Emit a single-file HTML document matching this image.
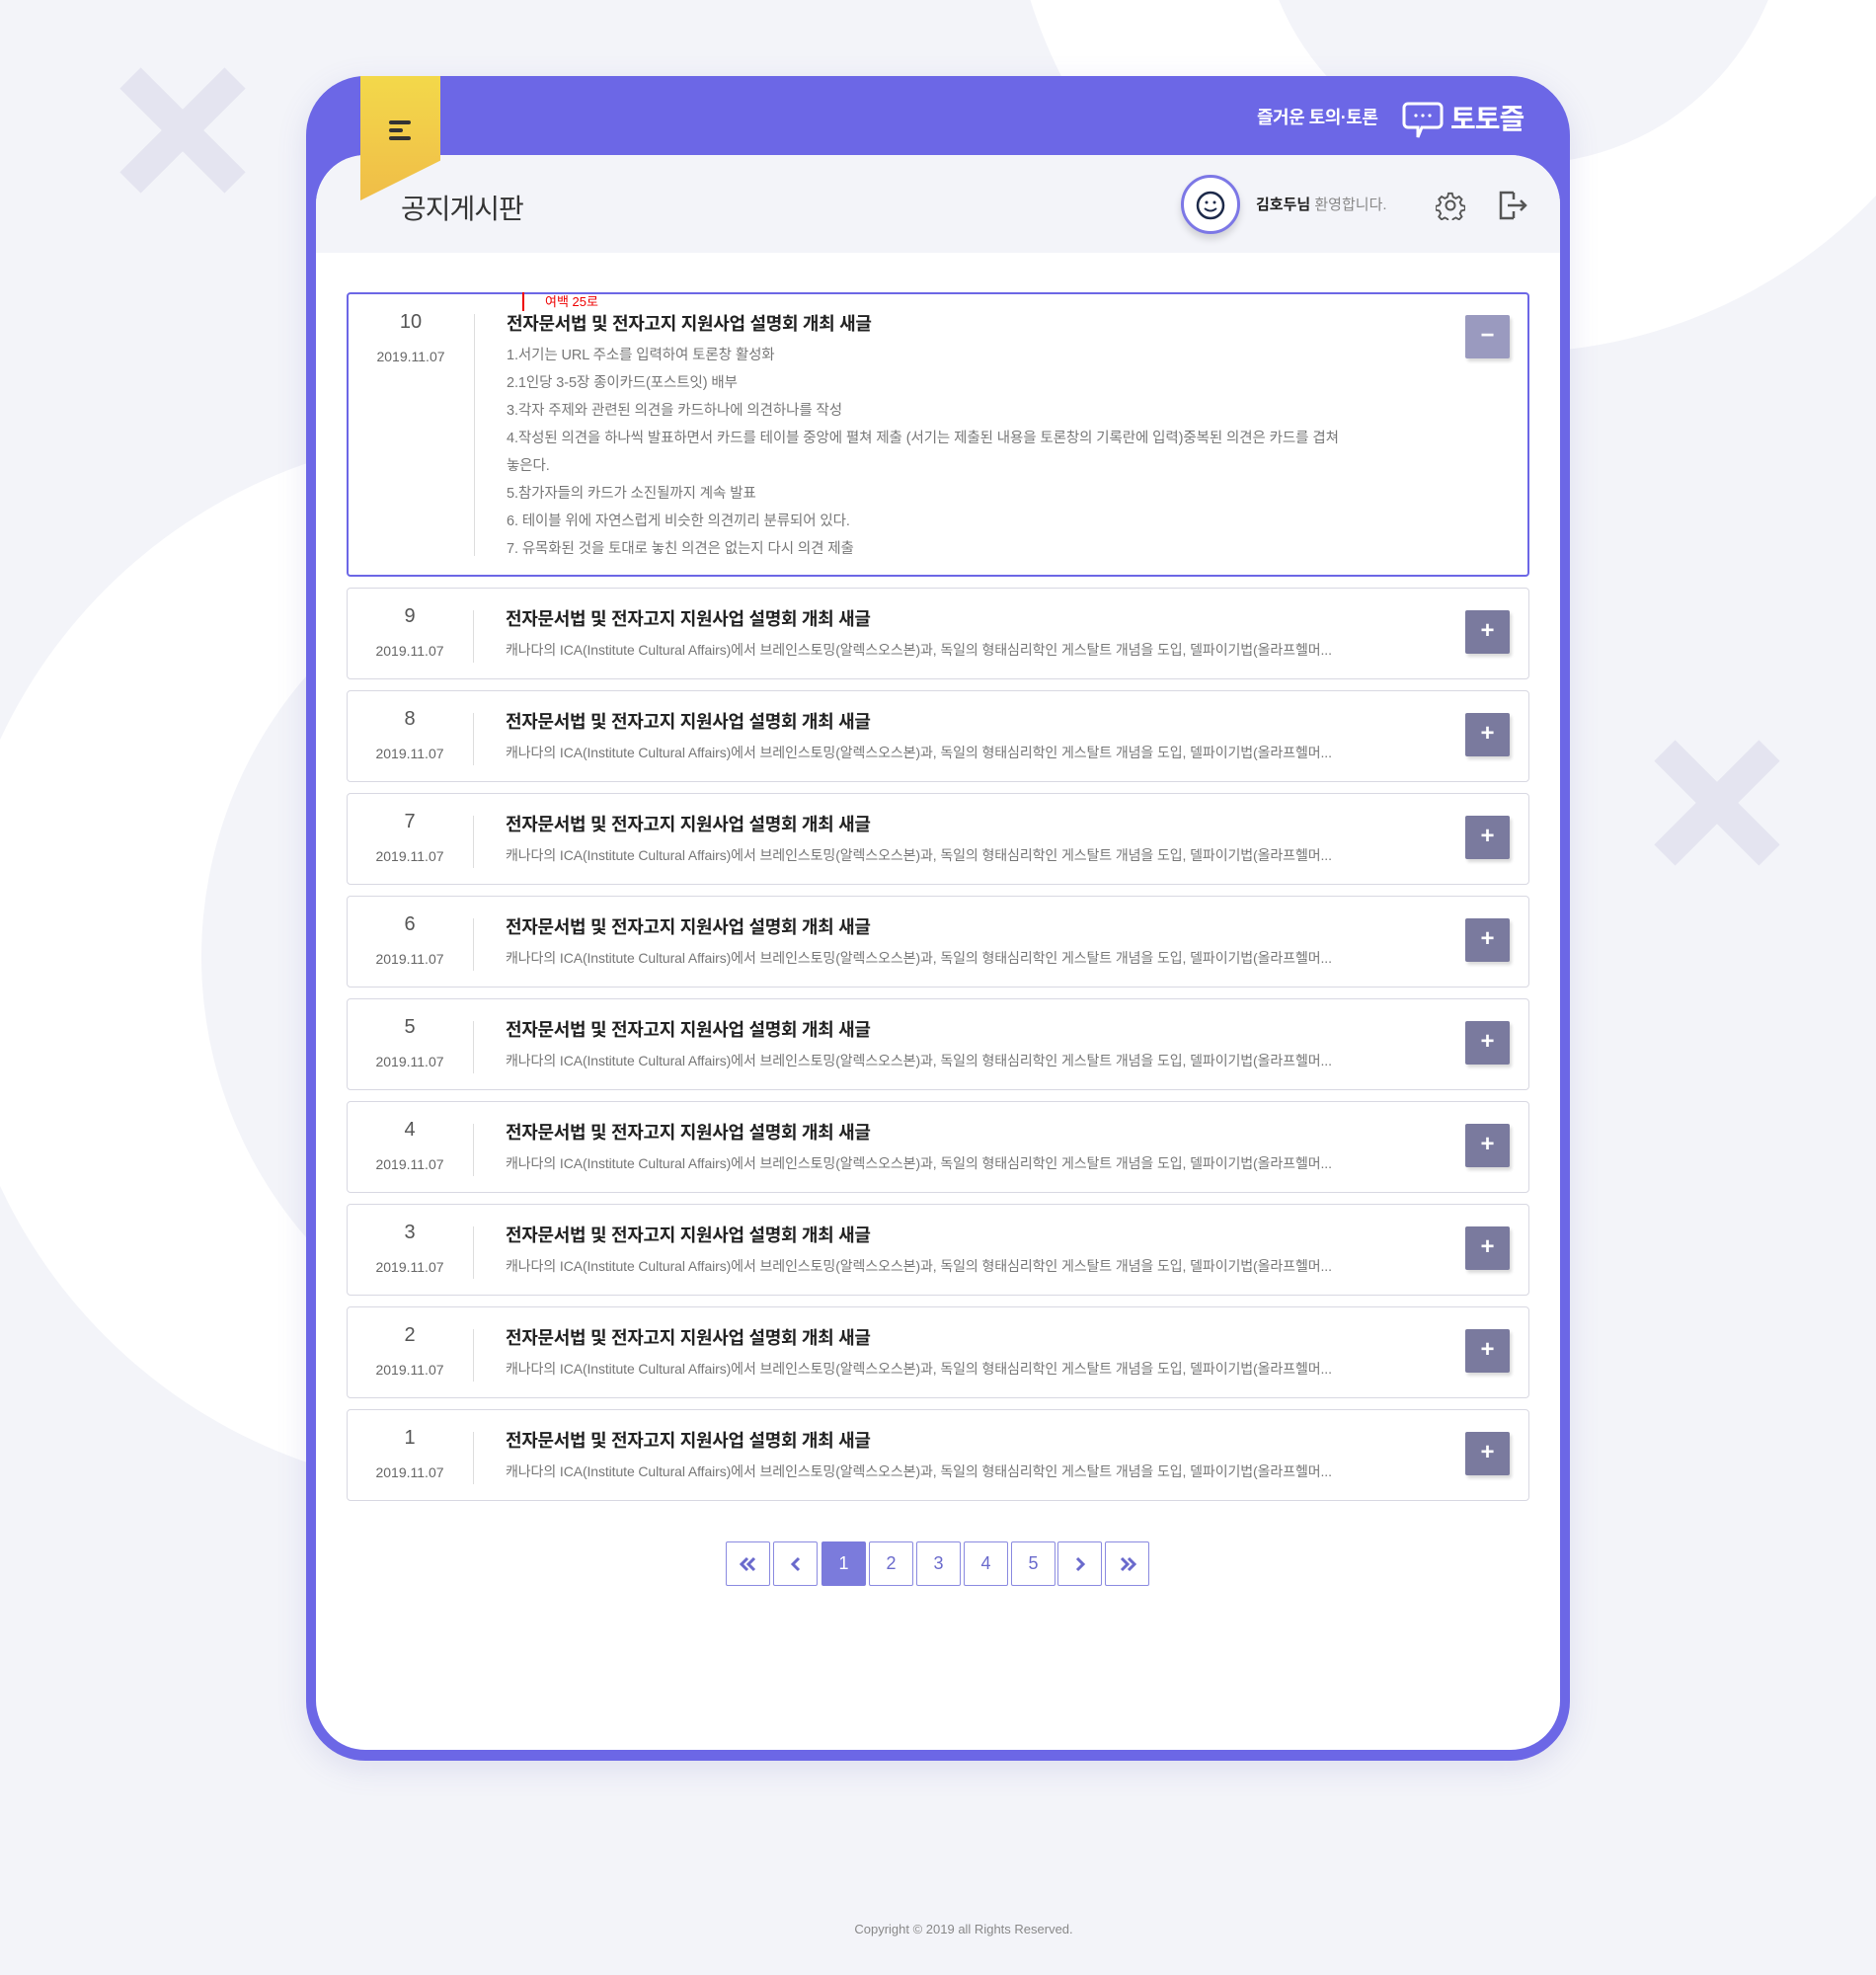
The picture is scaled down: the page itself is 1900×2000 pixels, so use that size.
<!DOCTYPE html>
<html><head><meta charset="utf-8"><style>
*{margin:0;padding:0;box-sizing:border-box}
body{width:1900px;height:2000px;background:#f3f4f9;position:relative;overflow:hidden;font-family:"Liberation Sans","Noto Sans CJK KR",sans-serif}
.c{position:absolute;border-radius:50%}
.x{position:absolute;width:122px;height:122px}
.x:before,.x:after{content:"";position:absolute;left:-14px;top:46px;width:150px;height:30px;background:#e4e4f0;transform:rotate(45deg)}
.x:after{transform:rotate(-45deg)}
.card{position:absolute;left:310px;top:77px;width:1280px;height:1706px;background:#6c67e6;border-radius:60px;box-shadow:0 8px 30px rgba(100,100,180,.15)}
.inner{position:absolute;left:10px;top:80px;width:1260px;height:1615px;background:#fff;border-radius:50px;overflow:hidden}
.ghead{position:absolute;left:0;top:0;width:100%;height:99px;background:#f3f4f9}
.rib{position:absolute;left:365px;top:77px;width:81px;height:126px;background:linear-gradient(#f3d84a,#f0bd48);clip-path:polygon(0 0,100% 0,100% 68%,0 100%);filter:drop-shadow(6px 6px 8px rgba(0,0,0,.2))}
.item{position:absolute;left:351px;width:1198px;height:93px;background:#fff;border:1px solid #d8d8e2;border-radius:4px}
.num{position:absolute;left:0;width:126px;text-align:center;top:17px;font-size:20px;color:#555}
.date{position:absolute;left:0;width:126px;text-align:center;top:55px;font-size:14px;color:#666}
.div{position:absolute;left:127px;top:22px;height:53px;border-left:1px solid #ddd}
.tit{position:absolute;left:160px;top:17px;font-size:18px;color:#222;font-weight:bold;letter-spacing:-.3px}
.desc{position:absolute;left:160px;top:52px;font-size:14px;color:#777;letter-spacing:-.1px}
.btn{position:absolute;left:1132px;top:22px;width:45px;height:44px;background:#7a7a9e;color:#fff;font-size:24px;font-weight:bold;text-align:center;line-height:42px;border-radius:2px;box-shadow:2px 3px 3px rgba(0,0,0,.15)}
.pg{position:absolute;top:1561px;width:45px;height:45px;border:1px solid #8a8ae0;border-radius:2px;color:#6a6acc;font-size:18px;text-align:center;line-height:43px;background:#fff}
.pg svg{position:absolute;left:12px;top:12px}
</style></head><body>
<div class="c" style="left:1020px;top:-663px;width:1020px;height:1020px;background:#fff"></div>
<div class="c" style="left:1275px;top:-370px;width:536px;height:536px;background:#f3f4f9"></div>
<div class="c" style="left:-50px;top:440px;width:1070px;height:1070px;background:#fff"></div>
<div class="c" style="left:204px;top:535px;width:868px;height:868px;background:#f3f4f9"></div>
<div class="x" style="left:124px;top:71px"></div>
<div class="x" style="left:1678px;top:752px"></div>

<div class="card"><div class="inner"><div class="ghead"></div></div></div>
<div class="rib"></div>
<div style="position:absolute;left:394px;top:122px;width:22px;height:4px;background:#333;border-radius:2px"></div>
<div style="position:absolute;left:394px;top:130px;width:14px;height:4px;background:#333;border-radius:2px"></div>
<div style="position:absolute;left:394px;top:138px;width:22px;height:4px;background:#333;border-radius:2px"></div>

<div style="position:absolute;left:1273px;top:105px;font-size:18px;color:#fff;font-weight:bold;letter-spacing:-.5px">즐거운 토의·토론</div>
<svg style="position:absolute;left:1420px;top:102px" width="42" height="40" viewBox="0 0 42 40"><path d="M6 3h30a4 4 0 0 1 4 4v16a4 4 0 0 1-4 4H20l-4 10 0-10H6a4 4 0 0 1-4-4V7a4 4 0 0 1 4-4z" fill="none" stroke="#fff" stroke-width="3"/><circle cx="14" cy="15" r="1.6" fill="#fff"/><circle cx="21" cy="15" r="1.6" fill="#fff"/><circle cx="28" cy="15" r="1.6" fill="#fff"/></svg>
<div style="position:absolute;left:1469px;top:99px;font-size:28px;color:#fff;font-weight:bold;letter-spacing:-1px">토토즐</div>

<div style="position:absolute;left:406px;top:190px;font-size:28px;color:#333;letter-spacing:-1px">공지게시판</div>
<div style="position:absolute;left:1196px;top:177px;width:60px;height:60px;border-radius:50%;background:#fff;border:3px solid #7c77e6;box-shadow:0 5px 8px rgba(0,0,0,.15)"></div>
<svg style="position:absolute;left:1210px;top:192px" width="32" height="32" viewBox="0 0 32 32"><circle cx="16" cy="16" r="13" fill="none" stroke="#1d2a4a" stroke-width="2.5"/><circle cx="12" cy="13" r="1.5" fill="#1d2a4a"/><circle cx="20" cy="13" r="1.5" fill="#1d2a4a"/><path d="M10 19q6 5 12 0" fill="none" stroke="#1d2a4a" stroke-width="2"/></svg>
<div style="position:absolute;left:1272px;top:196px;font-size:15px;color:#222;font-weight:bold">김호두님 <span style="font-weight:normal;color:#888">환영합니다.</span></div>
<svg style="position:absolute;left:1454px;top:193px" width="30" height="30" viewBox="0 0 30 30"><path d="M13 2h4l1 4 3 1.5 3.5-2 3 3-2 3.5 1.5 3 4 1v4l-4 1-1.5 3 2 3.5-3 3-3.5-2-3 1.5-1 4h-4l-1-4-3-1.5-3.5 2-3-3 2-3.5-1.5-3-4-1v-4l4-1 1.5-3-2-3.5 3-3 3.5 2 3-1.5z" fill="none" stroke="#555" stroke-width="2" transform="scale(.93) translate(1 1)"/><circle cx="15" cy="15" r="4.5" fill="none" stroke="#555" stroke-width="2"/></svg>
<svg style="position:absolute;left:1517px;top:193px" width="32" height="30" viewBox="0 0 32 30"><path d="M16 2H3v26h13M16 2v7M16 28v-7" fill="none" stroke="#555" stroke-width="2.5"/><path d="M10 15h18M23 10l5 5-5 5" fill="none" stroke="#555" stroke-width="2.5"/></svg>

<div class="item" style="top:296px;height:288px;border:2px solid #6c67e6">
<div class="num" style="top:17px">10</div><div class="date" style="top:55px">2019.11.07</div>
<div style="position:absolute;left:127px;top:20px;height:245px;border-left:1px solid #ddd"></div>
<div class="tit" style="top:16px">전자문서법 및 전자고지 지원사업 설명회 개최 새글</div>
<div style="position:absolute;left:160px;top:48px;font-size:14.5px;color:#777;line-height:28px;letter-spacing:-.1px">1.서기는 URL 주소를 입력하여 토론창 활성화<br>2.1인당 3-5장 종이카드(포스트잇) 배부<br>3.각자 주제와 관련된 의견을 카드하나에 의견하나를 작성<br>4.작성된 의견을 하나씩 발표하면서 카드를 테이블 중앙에 펼쳐 제출 (서기는 제출된 내용을 토론창의 기록란에 입력)중복된 의견은 카드를 겹쳐<br>놓은다.<br>5.참가자들의 카드가 소진될까지 계속 발표<br>6. 테이블 위에 자연스럽게 비슷한 의견끼리 분류되어 있다.<br>7. 유목화된 것을 토대로 놓친 의견은 없는지 다시 의견 제출</div>
<div class="btn" style="left:1131px;top:21px;background:#9a9abf">−</div>
</div>
<div style="position:absolute;left:529px;top:296px;width:2px;height:19px;background:#e00"></div>
<div style="position:absolute;left:552px;top:295px;font-size:13px;color:#e00">여백 25로</div>

<div class="item" style="top:595px"><div class="num">9</div><div class="date">2019.11.07</div><div class="div"></div><div class="tit">전자문서법 및 전자고지 지원사업 설명회 개최 새글</div><div class="desc">캐나다의 ICA(Institute Cultural Affairs)에서 브레인스토밍(알렉스오스본)과, 독일의 형태심리학인 게스탈트 개념을 도입, 델파이기법(올라프헬머...</div><div class="btn">+</div></div>
<div class="item" style="top:699px"><div class="num">8</div><div class="date">2019.11.07</div><div class="div"></div><div class="tit">전자문서법 및 전자고지 지원사업 설명회 개최 새글</div><div class="desc">캐나다의 ICA(Institute Cultural Affairs)에서 브레인스토밍(알렉스오스본)과, 독일의 형태심리학인 게스탈트 개념을 도입, 델파이기법(올라프헬머...</div><div class="btn">+</div></div>
<div class="item" style="top:803px"><div class="num">7</div><div class="date">2019.11.07</div><div class="div"></div><div class="tit">전자문서법 및 전자고지 지원사업 설명회 개최 새글</div><div class="desc">캐나다의 ICA(Institute Cultural Affairs)에서 브레인스토밍(알렉스오스본)과, 독일의 형태심리학인 게스탈트 개념을 도입, 델파이기법(올라프헬머...</div><div class="btn">+</div></div>
<div class="item" style="top:907px"><div class="num">6</div><div class="date">2019.11.07</div><div class="div"></div><div class="tit">전자문서법 및 전자고지 지원사업 설명회 개최 새글</div><div class="desc">캐나다의 ICA(Institute Cultural Affairs)에서 브레인스토밍(알렉스오스본)과, 독일의 형태심리학인 게스탈트 개념을 도입, 델파이기법(올라프헬머...</div><div class="btn">+</div></div>
<div class="item" style="top:1011px"><div class="num">5</div><div class="date">2019.11.07</div><div class="div"></div><div class="tit">전자문서법 및 전자고지 지원사업 설명회 개최 새글</div><div class="desc">캐나다의 ICA(Institute Cultural Affairs)에서 브레인스토밍(알렉스오스본)과, 독일의 형태심리학인 게스탈트 개념을 도입, 델파이기법(올라프헬머...</div><div class="btn">+</div></div>
<div class="item" style="top:1115px"><div class="num">4</div><div class="date">2019.11.07</div><div class="div"></div><div class="tit">전자문서법 및 전자고지 지원사업 설명회 개최 새글</div><div class="desc">캐나다의 ICA(Institute Cultural Affairs)에서 브레인스토밍(알렉스오스본)과, 독일의 형태심리학인 게스탈트 개념을 도입, 델파이기법(올라프헬머...</div><div class="btn">+</div></div>
<div class="item" style="top:1219px"><div class="num">3</div><div class="date">2019.11.07</div><div class="div"></div><div class="tit">전자문서법 및 전자고지 지원사업 설명회 개최 새글</div><div class="desc">캐나다의 ICA(Institute Cultural Affairs)에서 브레인스토밍(알렉스오스본)과, 독일의 형태심리학인 게스탈트 개념을 도입, 델파이기법(올라프헬머...</div><div class="btn">+</div></div>
<div class="item" style="top:1323px"><div class="num">2</div><div class="date">2019.11.07</div><div class="div"></div><div class="tit">전자문서법 및 전자고지 지원사업 설명회 개최 새글</div><div class="desc">캐나다의 ICA(Institute Cultural Affairs)에서 브레인스토밍(알렉스오스본)과, 독일의 형태심리학인 게스탈트 개념을 도입, 델파이기법(올라프헬머...</div><div class="btn">+</div></div>
<div class="item" style="top:1427px"><div class="num">1</div><div class="date">2019.11.07</div><div class="div"></div><div class="tit">전자문서법 및 전자고지 지원사업 설명회 개최 새글</div><div class="desc">캐나다의 ICA(Institute Cultural Affairs)에서 브레인스토밍(알렉스오스본)과, 독일의 형태심리학인 게스탈트 개념을 도입, 델파이기법(올라프헬머...</div><div class="btn">+</div></div>

<div class="pg" style="left:735px"><svg width="20" height="20" viewBox="0 0 20 20"><path d="M9 4l-6 6 6 6M16 4l-6 6 6 6" fill="none" stroke="#6a6acc" stroke-width="3"/></svg></div>
<div class="pg" style="left:783px"><svg width="20" height="20" viewBox="0 0 20 20"><path d="M13 4l-6 6 6 6" fill="none" stroke="#6a6acc" stroke-width="3"/></svg></div>
<div class="pg" style="left:832px;background:#7b7bdc;color:#fff;border-color:#7b7bdc">1</div>
<div class="pg" style="left:880px">2</div>
<div class="pg" style="left:928px">3</div>
<div class="pg" style="left:976px">4</div>
<div class="pg" style="left:1024px">5</div>
<div class="pg" style="left:1071px"><svg width="20" height="20" viewBox="0 0 20 20"><path d="M7 4l6 6-6 6" fill="none" stroke="#6a6acc" stroke-width="3"/></svg></div>
<div class="pg" style="left:1119px"><svg width="20" height="20" viewBox="0 0 20 20"><path d="M4 4l6 6-6 6M11 4l6 6-6 6" fill="none" stroke="#6a6acc" stroke-width="3"/></svg></div>

<div style="position:absolute;left:0;width:1952px;text-align:center;top:1946px;font-size:13px;color:#888">Copyright © 2019 all Rights Reserved.</div>
</body></html>
